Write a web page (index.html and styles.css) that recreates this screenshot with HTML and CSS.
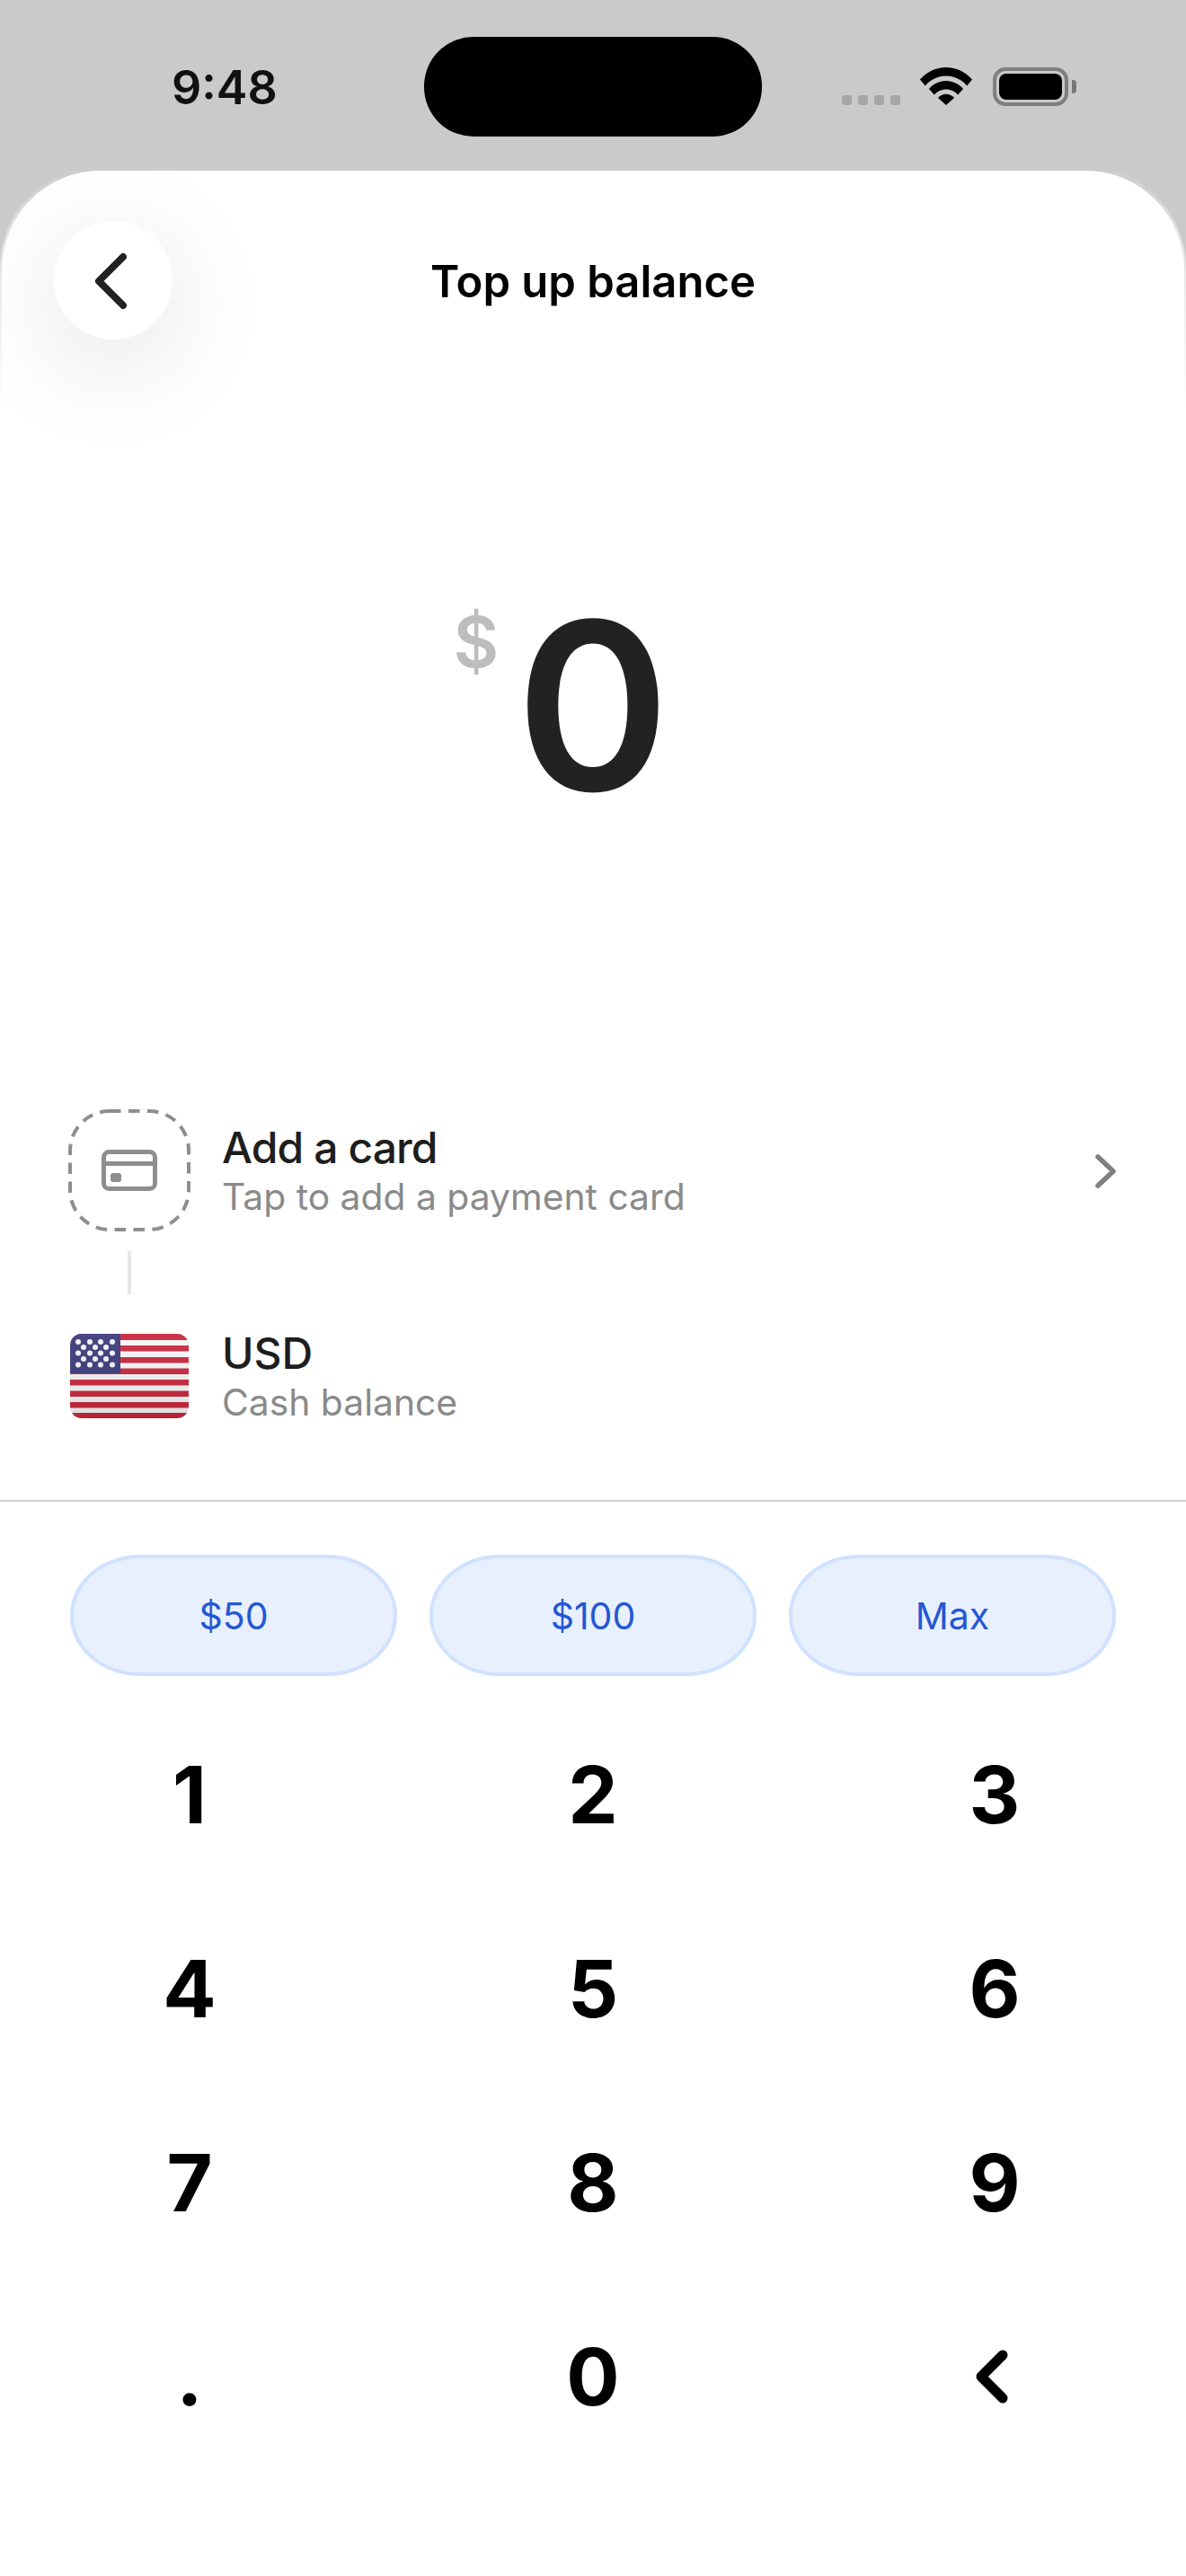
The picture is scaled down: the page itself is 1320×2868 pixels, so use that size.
FILE: index.html
```html
<!DOCTYPE html>
<html lang="en">
<head>
<meta charset="utf-8">
<title>Top up balance</title>
<link rel="stylesheet" href="styles.css">
</head>
<body>
<div class="phone">
  <header class="status">
    <span class="time">9:48</span>
    <div class="island"></div>
    <div class="indicators">
      <div class="signal"><i></i><i></i><i></i><i></i></div>
      <svg class="wifi" viewBox="0 0 58 42"><path d="M0 13.500C7.500 5 18 0 29 0s21.500 5 29 13.500l-5.800 7C46.500 13.500 38 9.500 29 9.500S11.500 13.500 5.800 20.500z"/><path d="M10 24C14.500 18.500 21.500 15 29 15s14.500 3.500 19 9l-5.800 6.500C38.800 26.800 34 24.500 29 24.500S19.200 26.800 15.800 30.500z"/><path d="M20 34c2-2.600 5.400-4.200 9-4.200s7 1.600 9 4.200L29 42z"/></svg>
      <div class="battery"><div class="cell"><div class="charge"></div></div><div class="nub"></div></div>
    </div>
  </header>
  <main class="sheet">
    <div class="sheet-inner">
      <div class="nav">
        <button class="back" aria-label="Back"><svg viewBox="0 0 40 64" class="back-icon"><path d="M34 6 7 33l27 27" /></svg></button>
        <h1 class="title">Top up balance</h1>
      </div>
      <div class="amount"><span class="currency">$</span><span class="value">0</span></div>
      <div class="sources">
        <div class="row">
          <div class="card-slot">
            <svg class="slot-outline" viewBox="0 0 136 136"><rect x="2" y="2" width="132" height="132" rx="44"/></svg>
            <svg class="card-icon" viewBox="0 0 62 46"><rect x="2.500" y="2.500" width="57" height="41" rx="6"/><path d="M2.500 15.500h57"/><rect class="chip" x="10" y="26" width="12" height="10" rx="3"/></svg>
          </div>
          <div class="row-text"><div class="row-title row-title-card">Add a card</div><div class="row-sub">Tap to add a payment card</div></div>
          <svg class="chevron" viewBox="0 0 24 38"><path d="M4 3l17 16L4 35"/></svg>
        </div>
        <div class="connector"></div>
        <div class="row row-usd">
          <svg class="flag" viewBox="0 0 132 94">
            <defs>
              <clipPath id="flagclip"><rect width="132" height="94" rx="13"/></clipPath>
              <linearGradient id="flagshade" x1="0" y1="0" x2="0" y2="1"><stop offset="0" stop-color="#fff" stop-opacity=".06"/><stop offset="1" stop-color="#000" stop-opacity=".1"/></linearGradient>
            </defs>
            <g clip-path="url(#flagclip)">
              <rect width="132" height="94" fill="#f6f6f6"/>
              <path class="stripe" d="M0 0h132v7H0zM0 13h132v6.500H0zM0 26h132v6.500H0zM0 38.500h132v6.500H0zM0 51h132v6.500H0zM0 63.500h132v6.500H0zM0 76h132v6.500H0zM0 88h132v6H0z"/>
              <rect width="56" height="44" fill="#3c3b7a"/>
              <g fill="#f4f4f8">
                <circle cx="9" cy="9" r="3"/><circle cx="22" cy="9" r="3"/><circle cx="34" cy="9" r="3"/><circle cx="47" cy="9" r="3"/>
                <circle cx="15" cy="15" r="3"/><circle cx="28" cy="15" r="3"/><circle cx="40" cy="15" r="3"/><circle cx="47" cy="21.500" r="3"/>
                <circle cx="9" cy="21.500" r="3"/><circle cx="22" cy="21.500" r="3"/><circle cx="34" cy="21.500" r="3"/>
                <circle cx="15" cy="28" r="3"/><circle cx="28" cy="28" r="3"/><circle cx="40" cy="28" r="3"/>
                <circle cx="9" cy="34.500" r="3"/><circle cx="22" cy="34.500" r="3"/><circle cx="34" cy="34.500" r="3"/><circle cx="47" cy="34.500" r="3"/>
              </g>
              <rect width="132" height="94" fill="url(#flagshade)"/>
            </g>
          </svg>
          <div class="row-text"><div class="row-title">USD</div><div class="row-sub">Cash balance</div></div>
        </div>
      </div>
      <div class="divider"></div>
      <div class="presets">
        <button class="preset">$50</button>
        <button class="preset">$100</button>
        <button class="preset">Max</button>
      </div>
      <div class="keypad">
        <div class="key">1</div><div class="key">2</div><div class="key">3</div>
        <div class="key">4</div><div class="key">5</div><div class="key">6</div>
        <div class="key">7</div><div class="key">8</div><div class="key">9</div>
        <div class="key">.</div><div class="key">0</div>
        <div class="key"><svg class="del-icon" viewBox="0 0 36 60"><path d="M30 6 6 30l24 24"/></svg></div>
      </div>
    </div>
  </main>
</div>
</body>
</html>
```
FILE: styles.css
```css
* { box-sizing: border-box; }
html, body { margin: 0; padding: 0; }
body { background: #fff; font-family: Inter, "Liberation Sans", sans-serif; }
.phone { width: 1320px; height: 2868px; background: #cacaca; display: flex; flex-direction: column; overflow: hidden; }

.status { height: 186px; flex: none; display: flex; align-items: flex-start; }
.time { width: 472px; padding: 69px 0 0 191px; font-size: 52px; line-height: 58px; font-weight: 600; color: #111; }
.island { width: 376px; height: 111px; margin-top: 41px; background: #000; border-radius: 55px; }
.indicators { margin: 75px 0 0 89px; display: flex; align-items: flex-start; }
.signal { display: flex; gap: 7px; margin-top: 31px; }
.signal i { display: block; width: 11px; height: 11px; border-radius: 3px; background: #a6a6a6; }
.wifi { width: 58px; height: 42px; margin-left: 22px; fill: #000; }
.battery { display: flex; align-items: center; margin-left: 23px; }
.cell { width: 84px; height: 43px; border: 4px solid #7f7f7f; border-radius: 14px; padding: 3px; }
.charge { width: 100%; height: 100%; background: #000; border-radius: 8px; }
.nub { width: 5px; height: 15px; margin-left: 4px; background: #777; border-radius: 0 4px 4px 0; }

.sheet { flex: 1; padding: 4px 3px 0; overflow: hidden; border-radius: 112px 112px 0 0; background: linear-gradient(#cccccc 0, #dedede 60px, #ececec 140px, #fff 270px); }
.sheet-inner { height: 100%; background: #fff; border-radius: 110px 110px 0 0; margin: 0 -1px; display: flex; flex-direction: column; }

.nav { height: 132px; margin-top: 56px; padding-left: 58px; display: flex; align-items: center; flex: none; position: relative; }
.back { width: 132px; height: 132px; border: 0; padding: 0; border-radius: 50%; background: #fff; box-shadow: 0 26px 120px rgba(0,0,0,.12); display: flex; align-items: center; justify-content: center; }
.back-icon { width: 40px; height: 64px; fill: none; stroke: #222; stroke-width: 8; stroke-linecap: round; stroke-linejoin: round; margin-left: -6px; }
.title { position: absolute; left: 0; right: 0; top: 2px; margin: 0; text-align: center; font-size: 49px; line-height: 132px; font-weight: 600; color: #000; }

.amount { height: 300px; margin-top: 258px; display: flex; justify-content: center; flex: none; padding-right: 72px; }
.currency { font-size: 78px; line-height: 90px; font-weight: 600; color: #bdbdbd; margin: 34px 19px 0 0; }
.value { font-size: 260px; line-height: 300px; font-weight: 600; color: #222; letter-spacing: -2px; }

.sources { margin-top: 299px; padding: 0 76px 0 74px; flex: none; }
.row { display: flex; align-items: center; height: 136px; }
.card-slot { width: 136px; height: 136px; flex: none; position: relative; display: flex; align-items: center; justify-content: center; }
.slot-outline { position: absolute; inset: 0; width: 136px; height: 136px; fill: none; stroke: #8e8e8e; stroke-width: 4; stroke-dasharray: 12.500 8.500; }
.card-icon { width: 62px; height: 46px; fill: none; stroke: #8e8e8e; stroke-width: 5; }
.card-icon .chip { fill: #8e8e8e; stroke: none; }
.row-text { margin-left: 35px; padding-top: 4px; flex: 1; }
.row-title { font-size: 48px; line-height: 54px; font-weight: 450; color: #1e1e1e; }
.row-title-card { letter-spacing: -.9px; }
.row-sub { font-size: 40.800px; line-height: 54px; color: #8a8a8a; }
.chevron { width: 24px; height: 38px; margin-top: 2px; fill: none; stroke: #808080; stroke-width: 5.500; stroke-linecap: round; stroke-linejoin: round; }
.connector { width: 4px; height: 48px; margin: 22px 0 0 66px; background: #e6e6e6; }
.row-usd { margin-top: 23px; height: 136px; padding-left: 2px; }
.row-usd .row-text { margin-left: 37px; }
.flag { width: 132px; height: 94px; flex: none; }
.stripe { fill: #c9283e; }

.divider { height: 2px; margin: 70px -2px 0; background: #d0d0d0; flex: none; }
.presets { display: grid; grid-template-columns: repeat(3, 364px); gap: 36px; padding: 0 76px; margin-top: 59px; flex: none; }
.preset { height: 135px; border: 4px solid #d0e2ff; border-radius: 78px / 67px; background: #e8f0fe; color: #2458d3; font-family: Inter, "Liberation Sans", sans-serif; font-size: 41px; font-weight: 400; padding: 0; }

.keypad { display: grid; grid-template-columns: 418px 480px 414px; grid-auto-rows: 216px; margin-top: 24px; flex: none; }
.key { display: flex; align-items: center; justify-content: center; font-size: 88px; font-weight: 700; color: #000; }
.del-icon { width: 36px; height: 60px; margin-left: -6px; fill: none; stroke: #000; stroke-width: 11; stroke-linecap: round; stroke-linejoin: round; }
```
